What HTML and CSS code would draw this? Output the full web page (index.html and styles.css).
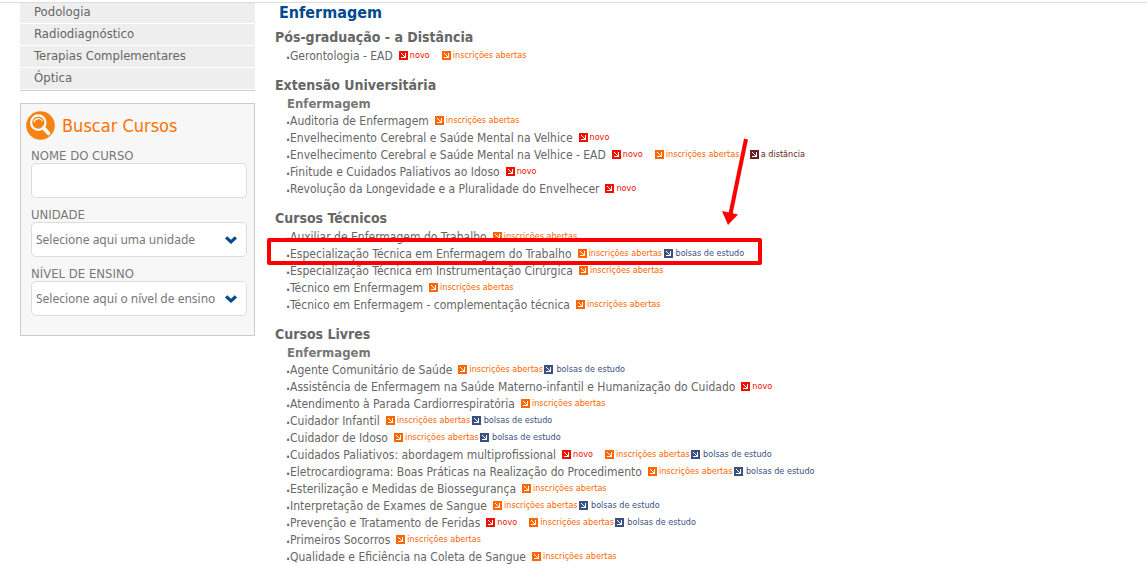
FILE: index.html
```
<!DOCTYPE html>
<html lang="pt-BR">

<head>
    <meta charset="UTF-8">
    <meta name="viewport" content="width=device-width, initial-scale=1.0">
    <title>Enfermagem - Cursos</title>
    <link rel="stylesheet" href="styles.css">
</head>

<body>
<!-- Shared icons -->
<svg class="sprite" aria-hidden="true">
    <symbol id="seta" viewBox="0 0 9 9">
        <rect width="9" height="9" fill="currentColor"/>
        <path d="M2 2h1v1h1v1h1v1h1V2h1v5H2V6h3V5H4V4H3V3H2z" fill="#fff"/>
    </symbol>
    <symbol id="chevron" viewBox="0 0 12 8">
        <path d="M0 2.5L2.2.3 6 3.8 9.8.3 12 2.5 6 8z" fill="#00498f"/>
    </symbol>
</svg>

<div class="page">
    <aside class="sidebar">
        <ul class="menu">
            <li><a href="#">Podologia</a></li>
            <li><a href="#">Radiodiagnóstico</a></li>
            <li><a href="#">Terapias Complementares</a></li>
            <li><a href="#">Óptica</a></li>
        </ul>

        <form class="search">
            <h2>
                <svg width="29" height="29" viewBox="0 0 29 29" aria-hidden="true">
                    <circle cx="14.5" cy="14.5" r="14.3" fill="#f58212"/>
                    <circle cx="12.3" cy="11.6" r="7.2" fill="none" stroke="#fff" stroke-width="2.2"/>
                    <path d="M8 11.3a4.5 4.5 0 0 1 8.5-1.2" fill="none" stroke="#fff" stroke-width="1.2"/>
                    <path d="M17.5 17l5 5.3" stroke="#fff" stroke-width="3.8" stroke-linecap="round"/>
                </svg>
                Buscar Cursos
            </h2>
            <label for="nome">NOME DO CURSO</label>
            <div class="field"><input type="text" id="nome"></div>
            <label for="unidade">UNIDADE</label>
            <div class="field">
                <select id="unidade"><option>Selecione aqui uma unidade</option></select>
                <svg class="chevron"><use href="#chevron"/></svg>
            </div>
            <label for="nivel">NÍVEL DE ENSINO</label>
            <div class="field">
                <select id="nivel"><option>Selecione aqui o nível de ensino</option></select>
                <svg class="chevron"><use href="#chevron"/></svg>
            </div>
        </form>
    </aside>

    <main class="courses">
        <h1>Enfermagem</h1>

        <section>
            <h2>Pós-graduação - a Distância</h2>
            <ul>
                <li><a href="#">Gerontologia - EAD</a><span class="tag novo"><svg><use href="#seta"/></svg>novo</span><span class="tag inscricoes"><svg><use href="#seta"/></svg>inscrições abertas</span></li>
            </ul>
        </section>

        <section>
            <h2>Extensão Universitária</h2>
            <h3>Enfermagem</h3>
            <ul>
                <li><a href="#">Auditoria de Enfermagem</a><span class="tag inscricoes"><svg><use href="#seta"/></svg>inscrições abertas</span></li>
                <li><a href="#">Envelhecimento Cerebral e Saúde Mental na Velhice</a><span class="tag novo"><svg><use href="#seta"/></svg>novo</span></li>
                <li><a href="#">Envelhecimento Cerebral e Saúde Mental na Velhice - EAD</a><span class="tag novo"><svg><use href="#seta"/></svg>novo</span><span class="tag inscricoes"><svg><use href="#seta"/></svg>inscrições abertas</span><span class="tag distancia"><svg><use href="#seta"/></svg>a distância</span></li>
                <li><a href="#">Finitude e Cuidados Paliativos ao Idoso</a><span class="tag novo"><svg><use href="#seta"/></svg>novo</span></li>
                <li><a href="#">Revolução da Longevidade e a Pluralidade do Envelhecer</a><span class="tag novo"><svg><use href="#seta"/></svg>novo</span></li>
            </ul>
        </section>

        <section>
            <h2>Cursos Técnicos</h2>
            <ul>
                <li><a href="#">Auxiliar de Enfermagem do Trabalho</a><span class="tag inscricoes"><svg><use href="#seta"/></svg>inscrições abertas</span></li>
                <li class="marked">
                    <a href="#">Especialização Técnica em Enfermagem do Trabalho</a><span class="tag inscricoes"><svg><use href="#seta"/></svg>inscrições abertas</span><span class="tag bolsas"><svg><use href="#seta"/></svg>bolsas de estudo</span>
                    <span class="marker">
                        <svg class="arrow" width="30" height="90" viewBox="0 0 30 90" aria-hidden="true">
                            <path d="M25 1L9.500 76" stroke="#f00" stroke-width="4"/>
                            <path d="M1 73l16 3.500L7 87z" fill="#f00"/>
                        </svg>
                    </span>
                </li>
                <li><a href="#">Especialização Técnica em Instrumentação Cirúrgica</a><span class="tag inscricoes"><svg><use href="#seta"/></svg>inscrições abertas</span></li>
                <li><a href="#">Técnico em Enfermagem</a><span class="tag inscricoes"><svg><use href="#seta"/></svg>inscrições abertas</span></li>
                <li><a href="#">Técnico em Enfermagem - complementação técnica</a><span class="tag inscricoes"><svg><use href="#seta"/></svg>inscrições abertas</span></li>
            </ul>
        </section>

        <section>
            <h2>Cursos Livres</h2>
            <h3>Enfermagem</h3>
            <ul>
                <li><a href="#">Agente Comunitário de Saúde</a><span class="tag inscricoes"><svg><use href="#seta"/></svg>inscrições abertas</span><span class="tag bolsas"><svg><use href="#seta"/></svg>bolsas de estudo</span></li>
                <li><a href="#">Assistência de Enfermagem na Saúde Materno-infantil e Humanização do Cuidado</a><span class="tag novo"><svg><use href="#seta"/></svg>novo</span></li>
                <li><a href="#">Atendimento à Parada Cardiorrespiratória</a><span class="tag inscricoes"><svg><use href="#seta"/></svg>inscrições abertas</span></li>
                <li><a href="#">Cuidador Infantil</a><span class="tag inscricoes"><svg><use href="#seta"/></svg>inscrições abertas</span><span class="tag bolsas"><svg><use href="#seta"/></svg>bolsas de estudo</span></li>
                <li><a href="#">Cuidador de Idoso</a><span class="tag inscricoes"><svg><use href="#seta"/></svg>inscrições abertas</span><span class="tag bolsas"><svg><use href="#seta"/></svg>bolsas de estudo</span></li>
                <li><a href="#">Cuidados Paliativos: abordagem multiprofissional</a><span class="tag novo"><svg><use href="#seta"/></svg>novo</span><span class="tag inscricoes"><svg><use href="#seta"/></svg>inscrições abertas</span><span class="tag bolsas"><svg><use href="#seta"/></svg>bolsas de estudo</span></li>
                <li><a href="#">Eletrocardiograma: Boas Práticas na Realização do Procedimento</a><span class="tag inscricoes"><svg><use href="#seta"/></svg>inscrições abertas</span><span class="tag bolsas"><svg><use href="#seta"/></svg>bolsas de estudo</span></li>
                <li><a href="#">Esterilização e Medidas de Biossegurança</a><span class="tag inscricoes"><svg><use href="#seta"/></svg>inscrições abertas</span></li>
                <li><a href="#">Interpretação de Exames de Sangue</a><span class="tag inscricoes"><svg><use href="#seta"/></svg>inscrições abertas</span><span class="tag bolsas"><svg><use href="#seta"/></svg>bolsas de estudo</span></li>
                <li><a href="#">Prevenção e Tratamento de Feridas</a><span class="tag novo"><svg><use href="#seta"/></svg>novo</span><span class="tag inscricoes"><svg><use href="#seta"/></svg>inscrições abertas</span><span class="tag bolsas"><svg><use href="#seta"/></svg>bolsas de estudo</span></li>
                <li><a href="#">Primeiros Socorros</a><span class="tag inscricoes"><svg><use href="#seta"/></svg>inscrições abertas</span></li>
                <li><a href="#">Qualidade e Eficiência na Coleta de Sangue</a><span class="tag inscricoes"><svg><use href="#seta"/></svg>inscrições abertas</span></li>
            </ul>
        </section>
    </main>
</div>
</body>

</html>
```
FILE: styles.css
```
* {
    box-sizing: border-box;
}

body {
    margin: 0;
    padding-top: 2px;
    background-color: #fff;
    color: #666;
    font-family: Tahoma, "DejaVu Sans Condensed", "DejaVu Sans", sans-serif;
    font-size: 12px;
    line-height: 17px;
}

h1,
h2,
h3,
ul {
    margin: 0;
    padding: 0;
}

ul {
    list-style: none;
}

a {
    color: inherit;
    text-decoration: none;
}

.sprite {
    display: none;
}

.page {
    display: flex;
    align-items: flex-start;
    gap: 20px;
    padding-left: 20px;
    border-top: 1px solid #ddd;
}

/* Sidebar */
.sidebar {
    flex: 0 0 235px;
}

.menu {
    margin-bottom: 12px;
    border-bottom: 1px solid #ccc;
    font-size: 13px;
}

.menu a {
    display: block;
    padding: 1px 14px 3px;
    background-color: #eee;
    border-bottom: 1px solid #fff;
    line-height: 17px;
}

.menu li:first-child a {
    padding-top: 0;
}

.search {
    padding: 7px 7px 10px 10px;
    background-color: #f7f7f7;
    border: 1px solid #ccc;
    color: #777;
}

.search h2 {
    display: flex;
    align-items: center;
    gap: 7px;
    margin: 0 0 8px -5px;
    color: #ff7200;
    font-size: 18px;
    font-weight: normal;
}

.search label {
    display: block;
    font-size: 13px;
    line-height: 15px;
}

.field {
    position: relative;
    margin-bottom: 9px;
}

.field input,
.field select {
    display: block;
    width: 100%;
    height: 35px;
    padding: 0 4px;
    background-color: #fff;
    border: 1px solid #ddd;
    border-radius: 5px;
    color: #777;
    font-family: Tahoma, "Noto Sans", sans-serif;
    font-size: 12px;
    appearance: none;
}

.field select {
    padding-right: 24px;
}

.chevron {
    position: absolute;
    top: 14px;
    right: 10px;
    width: 12px;
    height: 8px;
    pointer-events: none;
}

/* Course list */
.courses {
    flex: 1;
    white-space: nowrap;
}

.courses h1 {
    padding-left: 4px;
    margin-bottom: 5px;
    color: #00498f;
    font-size: 16px;
    line-height: 20px;
}

.courses h2 {
    font-size: 14px;
    line-height: 19px;
}

.courses h3 {
    padding-left: 12px;
    color: #777;
    font-size: 13px;
    line-height: 17px;
}

.courses section {
    margin-bottom: 12px;
}

.courses li {
    display: flex;
    align-items: center;
    height: 17px;
    padding-left: 11px;
}

.courses li a {
    padding-top: 1px;
}

.courses li::before {
    content: ".";
    width: 4px;
    font-weight: bold;
}

.tag {
    display: flex;
    align-items: center;
    gap: 2px;
    margin-left: 9px;
    font-size: 9px;
}

a + .tag {
    margin-left: 6px;
}

.tag svg {
    width: 9px;
    height: 9px;
}

.novo {
    width: 34px;
    color: #e10;
}

.inscricoes {
    width: 86px;
    color: #f60;
}

.distancia {
    color: #622;
}

.bolsas {
    gap: 3px;
    margin-left: 0;
    color: #3b4f81;
}

/* Red highlight around one course */
.marked {
    position: relative;
}

.marker {
    position: absolute;
    top: -7px;
    left: -8px;
    width: 495px;
    height: 27px;
    border: 4px solid #f00;
    border-radius: 2px;
    pointer-events: none;
}

.arrow {
    position: absolute;
    right: 7px;
    bottom: 33px;
}
```
